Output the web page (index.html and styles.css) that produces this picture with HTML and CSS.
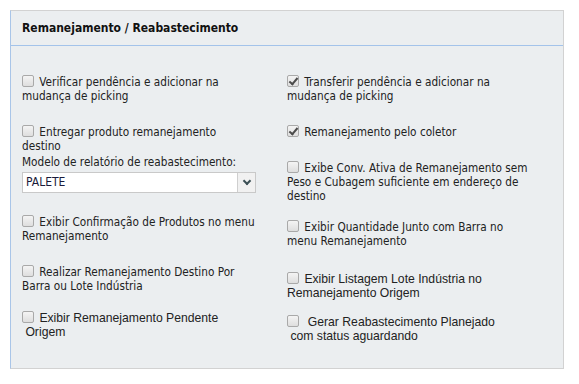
FILE: index.html
```html
<!DOCTYPE html>
<html lang="pt-br">
<head>
  <meta charset="UTF-8">
  <title>Remanejamento / Reabastecimento</title>
  <link rel="stylesheet" href="styles.css">
</head>
<body>
  <div class="painel">
    <div class="painel-titulo">Remanejamento / Reabastecimento</div>

    <div class="painel-corpo">
      <div class="coluna esquerda">
        <label class="opcao"><span class="chk"></span> Verificar pendência e adicionar na mudança de picking</label>
        <label class="opcao com-campo"><span class="chk"></span> Entregar produto remanejamento<br>destino</label>
        <div class="campo">
          <div class="campo-label">Modelo de relatório de reabastecimento:</div>
          <div class="select">
            <span class="select-valor">PALETE</span>
            <span class="select-seta"></span>
          </div>
        </div>
        <label class="opcao"><span class="chk"></span> Exibir Confirmação de Produtos no menu Remanejamento</label>
        <label class="opcao gap-18"><span class="chk"></span> Realizar Remanejamento Destino Por Barra ou Lote Indústria</label>
        <label class="opcao arial"><span class="chk"></span> Exibir Remanejamento Pendente<br>&nbsp;Origem</label>
      </div>

      <div class="coluna direita">
        <label class="opcao"><span class="chk marcado"></span> Transferir pendência e adicionar na mudança de picking</label>
        <label class="opcao"><span class="chk marcado"></span> Remanejamento pelo coletor</label>
        <label class="opcao gap-17"><span class="chk"></span> Exibe Conv. Ativa de Remanejamento sem Peso e Cubagem suficiente em endereço de destino</label>
        <label class="opcao gap-24"><span class="chk"></span> Exibir Quantidade Junto com Barra no menu Remanejamento</label>
        <label class="opcao arial gap-15"><span class="chk"></span> Exibir Listagem Lote Indústria no Remanejamento Origem</label>
        <label class="opcao arial"><span class="chk"></span>&nbsp; Gerar Reabastecimento Planejado<br>&nbsp;com status aguardando</label>
      </div>
    </div>
  </div>
</body>
</html>
```

FILE: styles.css
```css
* { box-sizing: border-box; margin: 0; padding: 0; }
body {
  background: #ffffff;
  font-family: "DejaVu Sans Condensed", "DejaVu Sans", sans-serif;
  font-size: 11.7px;
  color: #222;
}
.painel {
  width: 554px;
  height: 359px;
  margin: 10px 0 0 10px;
  background-color: #ebeef0;
  border: 1px solid #d2d2d2;
  border-left-color: #a9c5e8;
}
.painel-titulo {
  height: 35px;
  padding: 0 11px;
  line-height: 34px;
  font-size: 12px;
  font-weight: bold;
  color: #111;
  border-bottom: 1px solid #a3c3ea;
}
.painel-corpo {
  display: grid;
  grid-template-columns: 265px 1fr;
  padding: 29px 11px 0;
}
.coluna {
  display: flex;
  flex-direction: column;
}
.esquerda { padding-right: 28px; }
.direita { padding-right: 18px; }
.opcao {
  display: block;
  line-height: 14px;
  margin-bottom: 22px;
}
.opcao.com-campo { margin-bottom: 2px; }
.opcao.gap-15 { margin-bottom: 15px; }
.opcao.gap-17 { margin-bottom: 17px; }
.opcao.gap-18 { margin-bottom: 18px; }
.opcao.gap-24 { margin-bottom: 24px; }
.arial {
  font-family: "Liberation Sans", Arial, sans-serif;
  font-size: 12.2px;
}
.chk {
  display: inline-block;
  position: relative;
  width: 12px;
  height: 12px;
  margin-right: 2px;
  vertical-align: -1px;
  border: 1px solid #a9a9a9;
  border-radius: 2px;
  background: linear-gradient(#f4f4f4, #dedede);
}
.chk.marcado::after {
  content: "";
  position: absolute;
  left: 3px;
  top: 0px;
  width: 3px;
  height: 7px;
  border: solid #4b4b4b;
  border-width: 0 2px 2px 0;
  transform: rotate(40deg);
}
.campo {
  margin-bottom: 22px;
}
.campo-label {
  line-height: 15px;
  margin-bottom: 2px;
}
.select {
  display: flex;
  width: 234px;
  height: 21px;
  background: #fff;
  border: 1px solid #c9c9c9;
}
.select-valor {
  flex: 1;
  padding-left: 3px;
  line-height: 19px;
  font-size: 12px;
  color: #1a1a3a;
}
.select-seta {
  position: relative;
  width: 18px;
  background: #f1f1f1;
  border-left: 1px solid #cfcfcf;
}
.select-seta::after {
  content: "";
  position: absolute;
  left: 6px;
  top: 5px;
  width: 4px;
  height: 4px;
  border: solid #3c5056;
  border-width: 0 2px 2px 0;
  transform: rotate(45deg);
}
```
